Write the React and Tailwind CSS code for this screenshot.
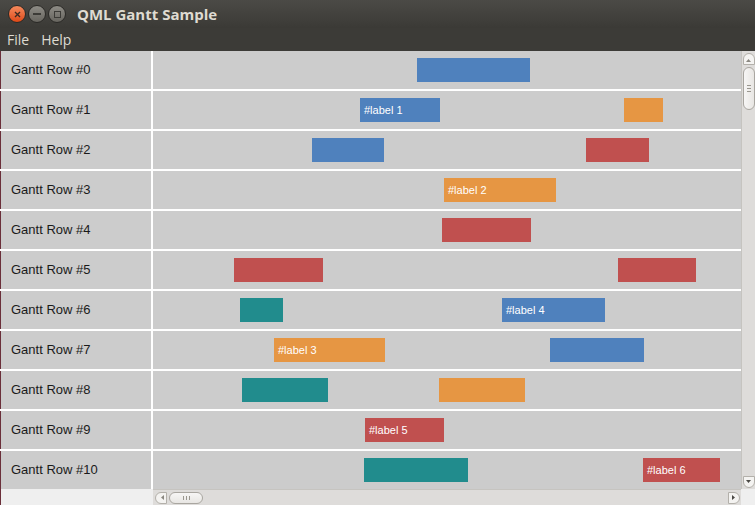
import React from 'react';

const COLORS = {
  blue: 'bg-[#4f81bd]',
  orange: 'bg-[#e69643]',
  red: 'bg-[#c0504f]',
  teal: 'bg-[#218c8d]',
};

// [startX, endX, colour, label] in window pixels; timeline starts at x=153
const ROWS = [
  [[417, 530, 'blue']],
  [[360, 440, 'blue', '#label 1'], [624, 663, 'orange']],
  [[312, 384, 'blue'], [586, 649, 'red']],
  [[444, 556, 'orange', '#label 2']],
  [[442, 531, 'red']],
  [[234, 323, 'red'], [618, 696, 'red']],
  [[240, 283, 'teal'], [502, 605, 'blue', '#label 4']],
  [[274, 385, 'orange', '#label 3'], [550, 644, 'blue']],
  [[242, 328, 'teal'], [439, 525, 'orange']],
  [[365, 444, 'red', '#label 5']],
  [[364, 468, 'teal'], [643, 720, 'red', '#label 6']],
];

const TIMELINE_X = 153;

function WindowButtons() {
  return (
    <div className="flex items-center gap-[2px] pl-[8px]">
      <div className="w-[18px] h-[18px] rounded-full border border-[#2b2a27] bg-gradient-to-b from-[#f58a5c] to-[#dd4814] flex items-center justify-center">
        <svg width="7" height="7" viewBox="0 0 7 7">
          <path d="M1 1 L6 6 M6 1 L1 6" stroke="#3c2a22" strokeWidth="1.4" />
        </svg>
      </div>
      <div className="w-[18px] h-[18px] rounded-full border border-[#2b2a27] bg-gradient-to-b from-[#8e8c86] to-[#67655f] flex items-center justify-center">
        <div className="w-[8px] h-[2px] bg-[#3c3b37]" />
      </div>
      <div className="w-[18px] h-[18px] rounded-full border border-[#2b2a27] bg-gradient-to-b from-[#8e8c86] to-[#67655f] flex items-center justify-center">
        <div className="w-[7px] h-[7px] border border-[#3c3b37]" />
      </div>
    </div>
  );
}

function GanttRow({ index, bars }) {
  return (
    <div className="flex h-[40px] shrink-0 border-b-2 border-white">
      <div className="w-[151px] shrink-0 flex items-center pl-[10px] text-[13px] text-[#1a1a1a] border-l border-[#6b2f3a]">
        Gantt Row #{index}
      </div>
      <div className="w-[2px] shrink-0 bg-white" />
      <div className="relative flex-1">
        {bars.map(([x1, x2, color, label], i) => (
          <div
            key={i}
            className={`absolute top-[7px] h-[24px] ${COLORS[color]} flex items-center pl-[4px] text-[11px] text-white`}
            style={{ left: x1 - TIMELINE_X, width: x2 - x1 }}
          >
            {label}
          </div>
        ))}
      </div>
    </div>
  );
}

function VScrollBar() {
  return (
    <div className="w-[14px] shrink-0 bg-[#dedcda] border-l border-[#c6c4c0] flex flex-col items-center pt-[2px] pb-[1px]">
      <div className="w-[12px] h-[12px] rounded-t-full bg-[#f4f3f1] border border-[#b3b0aa] flex items-end justify-center pb-[2px]">
        <svg width="5" height="3" viewBox="0 0 5 3"><path d="M0 3 L2.5 0 L5 3 Z" fill="#8a8780" /></svg>
      </div>
      <div className="mt-[2px] w-[12px] h-[43px] rounded-full bg-gradient-to-r from-[#f7f6f5] to-[#e8e6e3] border border-[#a9a6a0] flex flex-col items-center justify-center gap-[2px]">
        <div className="w-[4px] h-[1px] bg-[#9a978f]" />
        <div className="w-[4px] h-[1px] bg-[#9a978f]" />
        <div className="w-[4px] h-[1px] bg-[#9a978f]" />
      </div>
      <div className="flex-1" />
      <div className="w-[12px] h-[12px] rounded-b-full bg-[#f4f3f1] border border-[#b3b0aa] flex items-start justify-center pt-[3px]">
        <svg width="5" height="3" viewBox="0 0 5 3"><path d="M0 0 L2.5 3 L5 0 Z" fill="#4a4844" /></svg>
      </div>
    </div>
  );
}

function HScrollBar() {
  return (
    <div className="flex-1 h-full bg-[#dedcda] border-t border-[#c6c4c0] flex items-center pl-[2px] pr-[1px]">
      <div className="w-[12px] h-[12px] rounded-l-full bg-[#f4f3f1] border border-[#b3b0aa] flex items-center justify-end pr-[2px]">
        <svg width="3" height="5" viewBox="0 0 3 5"><path d="M3 0 L0 2.5 L3 5 Z" fill="#8a8780" /></svg>
      </div>
      <div className="ml-[2px] w-[34px] h-[12px] rounded-full bg-gradient-to-b from-[#f7f6f5] to-[#e8e6e3] border border-[#a9a6a0] flex items-center justify-center gap-[2px]">
        <div className="w-[1px] h-[4px] bg-[#9a978f]" />
        <div className="w-[1px] h-[4px] bg-[#9a978f]" />
        <div className="w-[1px] h-[4px] bg-[#9a978f]" />
      </div>
      <div className="flex-1" />
      <div className="w-[12px] h-[12px] rounded-r-full bg-[#f4f3f1] border border-[#b3b0aa] flex items-center justify-start pl-[3px]">
        <svg width="3" height="5" viewBox="0 0 3 5"><path d="M0 0 L3 2.5 L0 5 Z" fill="#4a4844" /></svg>
      </div>
    </div>
  );
}

export default function App() {
  return (
    <div className="w-[755px] h-[505px] flex flex-col overflow-hidden bg-[#f0efed] font-['Liberation_Sans',Arial,sans-serif]">
      {/* title bar */}
      <div className="h-[28px] shrink-0 flex items-center bg-gradient-to-b from-[#4b4a46] to-[#3b3a36]">
        <WindowButtons />
        <span className="ml-[11px] text-[15px] font-bold text-[#dfdbd2] font-['Open_Sans','DejaVu_Sans',sans-serif]">
          QML Gantt Sample
        </span>
      </div>

      {/* menu bar */}
      <div className="h-[23px] shrink-0 flex items-center gap-[12px] pl-[7px] bg-[#3c3b37] text-[14px] text-[#dfdbd2] font-['Open_Sans','DejaVu_Sans',sans-serif]">
        <span>File</span>
        <span>Help</span>
      </div>

      {/* chart */}
      <div className="h-[438px] shrink-0 flex">
        <div className="flex-1 flex flex-col overflow-hidden bg-[#cccccc]">
          {ROWS.map((bars, i) => (
            <GanttRow key={i} index={i} bars={bars} />
          ))}
        </div>
        <VScrollBar />
      </div>

      {/* bottom scroll row */}
      <div className="flex-1 flex">
        <div className="w-[153px] shrink-0 bg-[#efefef] border-l border-[#6b2f3a]" />
        <HScrollBar />
        <div className="w-[14px] shrink-0 bg-[#efefef]" />
      </div>
    </div>
  );
}
